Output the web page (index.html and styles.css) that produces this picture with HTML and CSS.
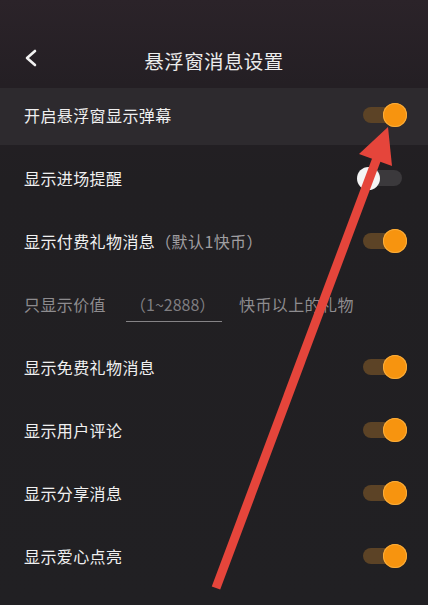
FILE: index.html
```html
<!DOCTYPE html>
<html lang="zh-CN">
<head>
    <meta charset="UTF-8">
    <meta name="viewport" content="width=device-width, initial-scale=1.0">
    <title>悬浮窗消息设置</title>
    <link rel="stylesheet" href="styles.css">
</head>
<body>
    <div id="container">
        <div class="header">
            <svg class="back" width="14" height="18" viewBox="0 0 14 18">
                <path d="M11 2 L3 9 L11 16" fill="none" stroke="#f2f2f2" stroke-width="2.6" stroke-linecap="round" stroke-linejoin="round"/>
            </svg>
            <p class="title">悬浮窗消息设置</p>
        </div>
        <div class="list">
            <div class="row first">
                <span>开启悬浮窗显示弹幕</span>
                <div class="switch on"></div>
            </div>
            <div class="row">
                <span>显示进场提醒</span>
                <div class="switch off"></div>
            </div>
            <div class="row">
                <span>显示付费礼物消息<em>（默认1快币）</em></span>
                <div class="switch on"></div>
            </div>
            <div class="row limit">
                <span>只显示价值</span>
                <input placeholder="（1~2888）" />
                <span>快币以上的礼物</span>
            </div>
            <div class="row">
                <span>显示免费礼物消息</span>
                <div class="switch on"></div>
            </div>
            <div class="row">
                <span>显示用户评论</span>
                <div class="switch on"></div>
            </div>
            <div class="row">
                <span>显示分享消息</span>
                <div class="switch on"></div>
            </div>
            <div class="row">
                <span>显示爱心点亮</span>
                <div class="switch on"></div>
            </div>
        </div>
        <!-- 标注箭头 -->
        <svg class="arrow" width="428" height="605" viewBox="0 0 428 605">
            <line x1="216" y1="588" x2="380" y2="150" stroke="#e5453b" stroke-width="9"/>
            <polygon points="388,127 359,154 392,166" fill="#e5453b"/>
        </svg>
    </div>
</body>
</html>
```

FILE: styles.css
```css
* {
    margin: 0;
    padding: 0;
    box-sizing: border-box;
}
body {
    background-color: #211f22;
    font-family: "Noto Sans CJK SC", "Noto Sans", sans-serif;
}
#container {
    width: 428px;
    height: 605px;
    position: relative;
    overflow: hidden;
    background: linear-gradient(180deg, #2b2329 0%, #241f24 14%, #211f22 30%, #212023 100%);
}
.header {
    height: 88px;
    display: flex;
    align-items: center;
    justify-content: center;
    padding-top: 32px;
}
.header .back {
    position: absolute;
    left: 24px;
    top: 49px;
}
.title {
    color: #ececec;
    font-size: 19.5px;
    letter-spacing: 0.4px;
}
.list {
    display: flex;
    flex-direction: column;
}
.row {
    height: 63px;
    display: flex;
    align-items: center;
    justify-content: space-between;
    padding: 0 28px 3px 24px;
    color: #f0f0f0;
    font-size: 16px;
    letter-spacing: 0.4px;
}
.row.first {
    height: 57px;
    margin-bottom: 3px;
    background-color: #2d2a2e;
}
.row em {
    font-style: normal;
    color: #a09ea1;
}
.switch {
    width: 37px;
    height: 16px;
    border-radius: 8px;
}
.switch.on {
    background-color: #5c4326;
}
.switch.off {
    background-color: #3b393c;
    margin-right: -2px;
    width: 35px;
}
.switch::after {
    content: "";
    display: block;
    width: 24px;
    height: 24px;
    border-radius: 50%;
    margin-top: -4px;
}
.switch.on::after {
    background-color: #f7940f;
    margin-left: 20px;
    box-shadow: 0 0 0 1px #f9ad3c inset;
}
.switch.off::after {
    background-color: #f4f4f4;
    width: 23px;
    height: 23px;
    margin-left: -10px;
    margin-top: -3.5px;
}
.row.limit {
    justify-content: flex-start;
    color: #8e8c8f;
}
.limit input {
    width: 96px;
    height: 32px;
    margin: 0 17px 0 20px;
    margin-top: 4px;
    background: transparent;
    border: 0;
    border-bottom: 1px solid #858386;
    outline: 0;
    color: #8e8c8f;
    font-family: "Noto Sans CJK SC", "Noto Sans", sans-serif;
    font-size: 16px;
    padding: 0 0 3px 4px;
}
.limit input::placeholder {
    color: #7f7d80;
}
.arrow {
    position: absolute;
    left: 0;
    top: 0;
    pointer-events: none;
}
```
